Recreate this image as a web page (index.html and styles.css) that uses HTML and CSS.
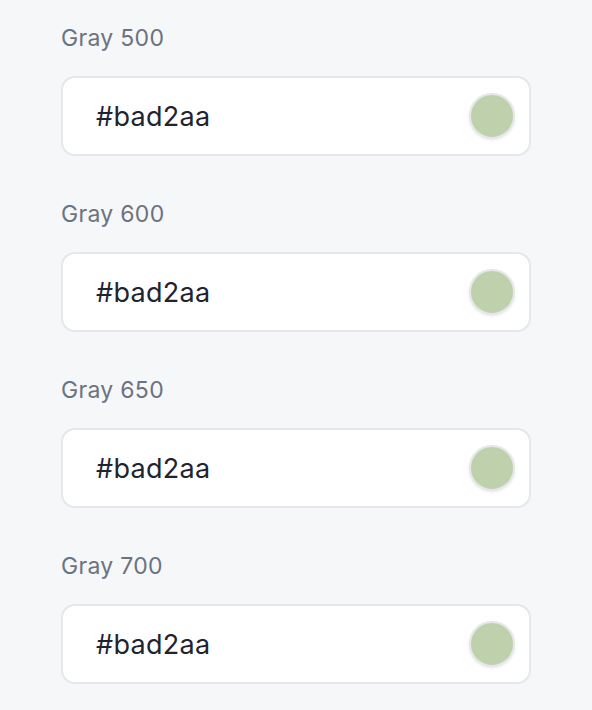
FILE: index.html
```html
<!DOCTYPE html>
<html lang="en">
<head>
  <meta charset="UTF-8">
  <meta name="viewport" content="width=device-width, initial-scale=1.0">
  <title>Gray Palette</title>
  <link rel="stylesheet" href="styles.css">
</head>
<body>
  <div class="palette">
    <div class="field">
      <label class="field-label">Gray 500</label>
      <div class="color-input">
        <input type="text" value="#bad2aa" />
        <span class="swatch"></span>
      </div>
    </div>
    <div class="field">
      <label class="field-label">Gray 600</label>
      <div class="color-input">
        <input type="text" value="#bad2aa" />
        <span class="swatch"></span>
      </div>
    </div>
    <div class="field">
      <label class="field-label">Gray 650</label>
      <div class="color-input">
        <input type="text" value="#bad2aa" />
        <span class="swatch"></span>
      </div>
    </div>
    <div class="field">
      <label class="field-label">Gray 700</label>
      <div class="color-input">
        <input type="text" value="#bad2aa" />
        <span class="swatch"></span>
      </div>
    </div>
  </div>
</body>
</html>
```

FILE: styles.css
```css
body {
  margin: 0;
  background: #f6f7f9;
  font-family: Inter, "Noto Sans", sans-serif;
}
.palette {
  display: flex;
  flex-direction: column;
  gap: 42px;
  padding: 22px 61px 0 61px;
}
.field {
  display: flex;
  flex-direction: column;
}
.field-label {
  font-size: 23px;
  line-height: 33px;
  letter-spacing: 0.3px;
  color: #6b7280;
  margin-bottom: 21px;
}
.color-input {
  display: flex;
  align-items: center;
  height: 80px;
  box-sizing: border-box;
  background: #fff;
  border: 2px solid #e5e7eb;
  border-radius: 14px;
  padding: 0 14px 0 33px;
}
.color-input input {
  flex: 1;
  min-width: 0;
  border: none;
  outline: none;
  background: transparent;
  padding: 0;
  font-family: Inter, "Noto Sans", sans-serif;
  font-size: 27px;
  letter-spacing: 0.3px;
  color: #1f2430;
}
.swatch {
  width: 46px;
  height: 46px;
  box-sizing: border-box;
  border-radius: 50%;
  background: #bfd0ad;
  border: 2px solid #e5e7eb;
  box-shadow: 0 1px 3px rgba(0, 0, 0, 0.1);
}
```
